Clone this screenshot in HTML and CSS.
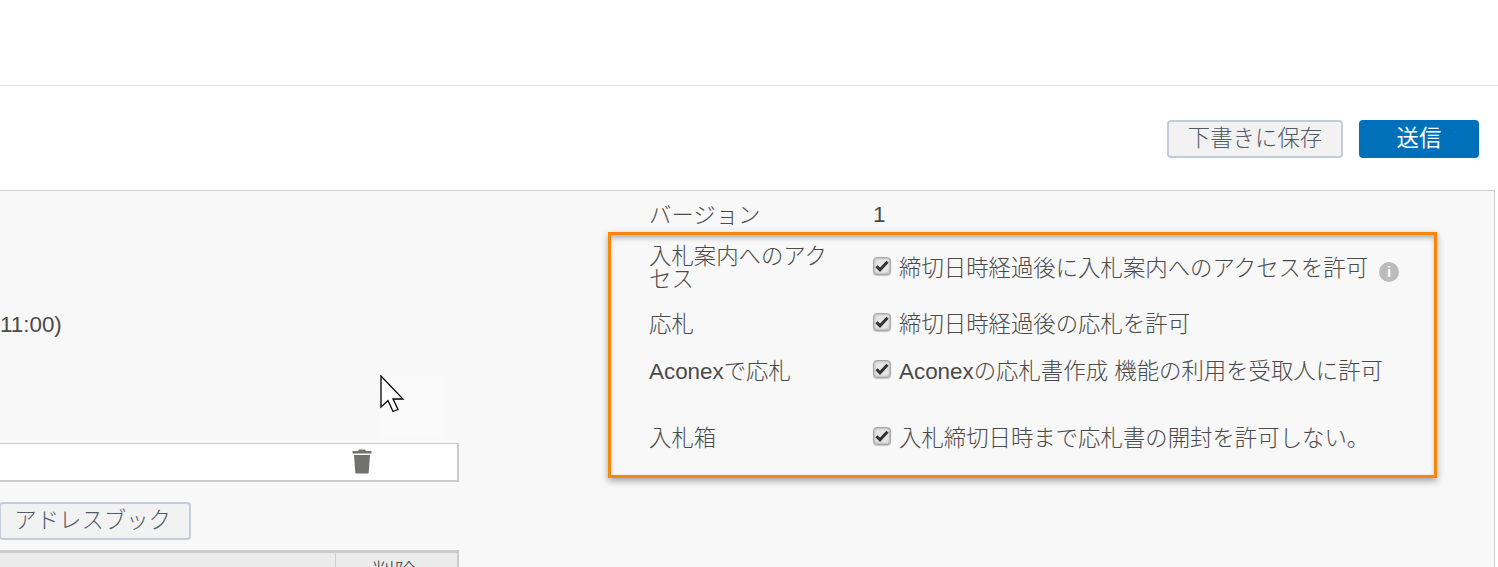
FILE: index.html
```
<!DOCTYPE html>
<html lang="ja">
<head>
<meta charset="utf-8">
<title>入札</title>
<link rel="stylesheet" href="styles.css">
</head>
<body>
<div class="page">
  <header class="top"></header>
  <div class="toolbar">
    <button class="btn btn-save">下書きに保存</button>
    <button class="btn btn-send">送信</button>
  </div>
  <main class="panel">
    <section class="left">
      <div class="date">11:00)</div>
      <div class="file-row">
        <svg class="trash" viewBox="0 0 20 26" width="20" height="26"><path d="M7 1.500h6l1 1.500h5.500v2.500H.5V3H6z" fill="#72726c"/><path d="M2 7h16l-1.300 17.500a1 1 0 0 1-1 1H4.300a1 1 0 0 1-1-1z" fill="#72726c"/></svg>
      </div>
      <div class="addr-row"><button class="btn btn-addr">アドレスブック</button></div>
      <div class="thead"><span class="th-main"></span><span class="th-del">削除</span></div>
    </section>
    <section class="right">
      <div class="row row-version">
        <span class="label">バージョン</span>
        <span class="num">1</span>
      </div>
      <div class="highlight">
        <div class="row row-access">
          <span class="label">入札案内へのアクセス</span>
          <span class="check"><svg viewBox="0 0 14 12" width="14" height="12"><path d="M1.500 6.200l3.500 3.600L12.500 1.800" fill="none" stroke="#333" stroke-width="3"/></svg></span>
          <span class="value">締切日時経過後に入札案内へのアクセスを許可</span>
          <span class="info">i</span>
        </div>
        <div class="row row-bid">
          <span class="label">応札</span>
          <span class="check"><svg viewBox="0 0 14 12" width="14" height="12"><path d="M1.500 6.200l3.500 3.600L12.500 1.800" fill="none" stroke="#333" stroke-width="3"/></svg></span>
          <span class="value">締切日時経過後の応札を許可</span>
        </div>
        <div class="row row-aconex">
          <span class="label">Aconexで応札</span>
          <span class="check"><svg viewBox="0 0 14 12" width="14" height="12"><path d="M1.500 6.200l3.500 3.600L12.500 1.800" fill="none" stroke="#333" stroke-width="3"/></svg></span>
          <span class="value">Aconexの応札書作成 機能の利用を受取人に許可</span>
        </div>
        <div class="row row-box">
          <span class="label">入札箱</span>
          <span class="check"><svg viewBox="0 0 14 12" width="14" height="12"><path d="M1.500 6.200l3.500 3.600L12.500 1.800" fill="none" stroke="#333" stroke-width="3"/></svg></span>
          <span class="value">入札締切日時まで応札書の開封を許可しない。</span>
        </div>
      </div>
    </section>
  </main>
  <div class="cursor">
    <svg viewBox="0 0 26 38" width="26" height="38"><path d="M1 1v31l7-6.500 5 11 5-2-5-10.500h10z" fill="#fff" stroke="#000" stroke-width="1.300" stroke-linejoin="miter"/></svg>
  </div>
</div>
</body>
</html>
```
FILE: styles.css
```
* { box-sizing: border-box; }
html, body { margin: 0; padding: 0; }
body {
  background: #fff;
  color: #4a4a4a;
  font-family: "Liberation Sans", "Noto Sans CJK JP", sans-serif;
  font-size: 22.4px;
  font-weight: 300;
}
.page {
  position: relative;
  width: 1498px;
  height: 567px;
  overflow: hidden;
}
.top {
  height: 86px;
  border-bottom: 1px solid #e2e2e2;
}
.toolbar {
  height: 104px;
  display: flex;
  justify-content: flex-end;
  gap: 16px;
  padding: 34px 19px 0 0;
}
.btn {
  font-family: inherit;
  font-size: 22.4px;
  font-weight: 300;
  height: 38px;
  padding: 0;
  border-radius: 4px;
  line-height: 1;
}
.btn-save, .btn-addr {
  background: #f2f2f2;
  border: 2px solid #c3cdd9;
  color: #505a68;
}
.btn-save { width: 176px; }
.btn-send {
  width: 120px;
  background: #0070bb;
  border: 0;
  color: #fff;
  font-weight: 400;
}
.panel {
  width: 1495px;
  height: 377px;
  background: #f8f8f8;
  border-top: 1px solid #ccc;
  border-right: 1px solid #ccc;
  display: flex;
}
.left {
  width: 459px;
  flex: none;
}
.date {
  margin-top: 121px;
  height: 26px;
  line-height: 26px;
}
.file-row {
  margin-top: 105px;
  height: 39px;
  background: #fff;
  border: 2px solid #ccc;
  border-width: 1px 2px 2px 0;
  padding: 4px 0 0 352px;
}
.trash { display: block; }
.addr-row {
  margin-top: 20px;
  height: 38px;
}
.btn-addr {
  display: block;
  width: 192px;
  margin-left: -1px;
  text-align: right;
  padding-right: 18px;
}
.thead {
  margin-top: 10px;
  height: 40px;
  background: #ebebeb;
  border-top: 3px solid #ccc;
  border-right: 2px solid #ccc;
  display: flex;
}
.th-main { width: 336px; border-right: 1px solid #ccc; }
.th-del {
  flex: 1;
  text-align: center;
  line-height: 30px;
  padding: 5px 4px 0 0;
}
.right {
  margin-left: 149px;
  width: 829px;
  flex: none;
}
.row {
  display: grid;
  grid-template-columns: 224px 17px auto auto;
  justify-content: start;
  align-items: center;
}
.row-version {
  padding-left: 41px;
  margin-top: 12px;
  height: 24px;
  grid-template-columns: 224px auto;
}
.label, .value, .num { line-height: 23px; }
.label { width: 190px; display: block; }
.row-version .label { width: auto; }
.num { line-height: 24px; }
.highlight {
  margin-top: 5px;
  height: 246px;
  border: 3px solid #f5880a;
  box-shadow: 0 3px 7px rgba(0, 0, 0, .35), inset 0 4px 5px -1px rgba(0, 0, 0, .28), inset 0 -1px 2px rgba(0, 0, 0, .05);
  padding: 10px 0 0 38px;
}
.row-bid { margin-top: 21px; height: 24px; }
.row-aconex { margin-top: 23px; height: 24px; }
.row-box { margin-top: 43px; height: 24px; }
.check {
  width: 18px;
  height: 18px;
  margin-top: -5px;
  border-radius: 4px;
  background: #e6e6e6;
  border: 1px solid #a8a8a8;
  box-shadow: inset 0 0 3px #8f8f8f, 0 1px 1px #c4c4c4;
  display: flex;
  align-items: center;
  justify-content: center;
}
.value { margin-left: 9px; padding-top: 1px; white-space: nowrap; }
.info {
  width: 20px;
  height: 20px;
  margin-left: 11px;
  margin-top: 7px;
  border-radius: 50%;
  background: #bcbcbc;
  color: #fff;
  font-family: "Liberation Sans", sans-serif;
  font-size: 15px;
  font-weight: 700;
  line-height: 20px;
  text-align: center;
}
.cursor {
  position: absolute;
  left: 380px;
  top: 375px;
  width: 64px;
  height: 63px;
  background: #f9f9f9;
}
.cursor svg { display: block; }
```
